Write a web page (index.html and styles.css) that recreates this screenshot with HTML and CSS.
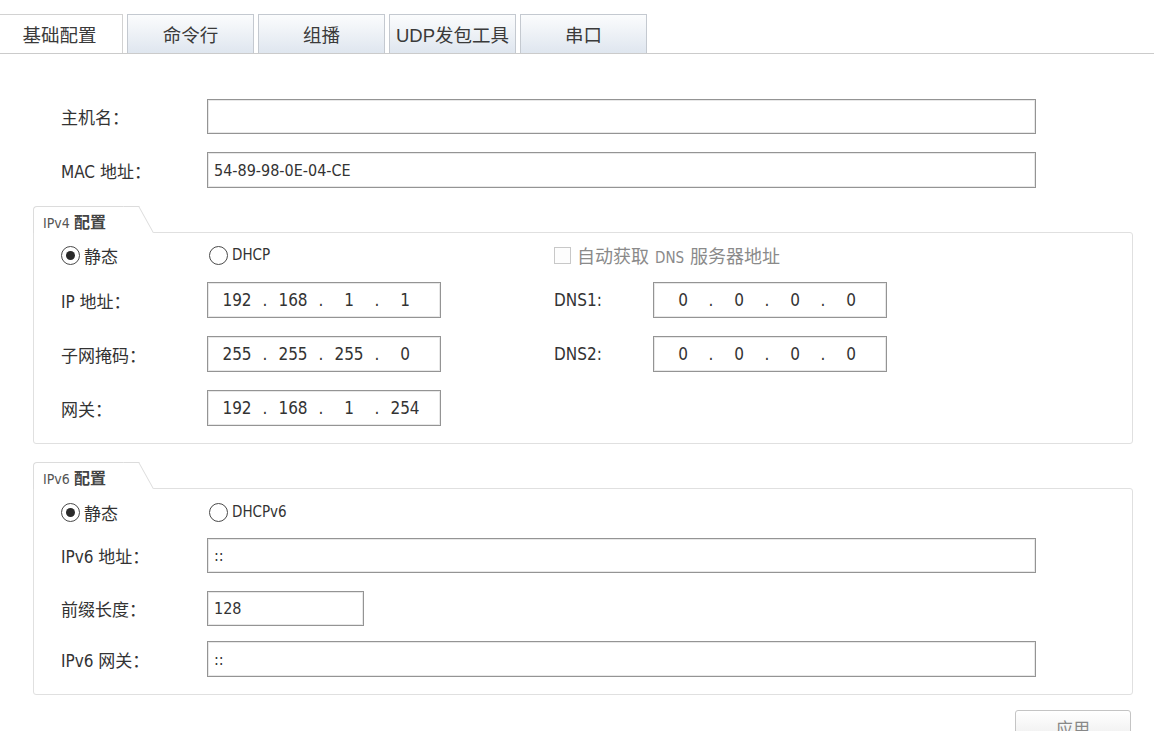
FILE: index.html
```html
<!DOCTYPE html>
<html lang="zh-CN">
<head>
<meta charset="utf-8">
<title>基础配置</title>
<link rel="stylesheet" href="styles.css">
</head>
<body>
<div class="tabs">
  <div class="tab active">基础配置</div>
  <div class="tab">命令行</div>
  <div class="tab">组播</div>
  <div class="tab">UDP发包工具</div>
  <div class="tab">串口</div>
</div>

<div class="content">
  <div class="row top-row r-host">
    <span class="lbl">主机名：</span>
    <div class="input wide"></div>
  </div>
  <div class="row top-row r-mac">
    <span class="lbl">MAC 地址：</span>
    <div class="input wide">54-89-98-0E-04-CE</div>
  </div>

  <div class="group g4">
    <div class="legend"><span class="lg-en">IPv4</span> <b>配置</b></div>
    <div class="box">
      <div class="row radio-row">
        <div class="col-left">
          <span class="opt opt-first"><span class="radio checked"></span><span class="txt">静态</span></span>
          <span class="opt"><span class="radio"></span><span class="txt lat">DHCP</span></span>
        </div>
        <div class="col-right">
          <span class="opt disabled"><span class="check"></span><span class="txt cbtxt">自动获取<span class="lat sp">DNS</span>服务器地址</span></span>
        </div>
      </div>
      <div class="row ip-row first-ip">
        <div class="col-left">
          <span class="lbl">IP 地址：</span>
          <div class="input ip"><span class="oct">192</span><span class="dot">.</span><span class="oct">168</span><span class="dot">.</span><span class="oct">1</span><span class="dot">.</span><span class="oct">1</span></div>
        </div>
        <div class="col-right">
          <span class="lbl lbl-dns">DNS1:</span>
          <div class="input ip"><span class="oct">0</span><span class="dot">.</span><span class="oct">0</span><span class="dot">.</span><span class="oct">0</span><span class="dot">.</span><span class="oct">0</span></div>
        </div>
      </div>
      <div class="row ip-row">
        <div class="col-left">
          <span class="lbl">子网掩码：</span>
          <div class="input ip"><span class="oct">255</span><span class="dot">.</span><span class="oct">255</span><span class="dot">.</span><span class="oct">255</span><span class="dot">.</span><span class="oct">0</span></div>
        </div>
        <div class="col-right">
          <span class="lbl lbl-dns">DNS2:</span>
          <div class="input ip"><span class="oct">0</span><span class="dot">.</span><span class="oct">0</span><span class="dot">.</span><span class="oct">0</span><span class="dot">.</span><span class="oct">0</span></div>
        </div>
      </div>
      <div class="row ip-row">
        <div class="col-left">
          <span class="lbl">网关：</span>
          <div class="input ip"><span class="oct">192</span><span class="dot">.</span><span class="oct">168</span><span class="dot">.</span><span class="oct">1</span><span class="dot">.</span><span class="oct">254</span></div>
        </div>
      </div>
    </div>
  </div>

  <div class="group g6">
    <div class="legend"><span class="lg-en">IPv6</span> <b>配置</b></div>
    <div class="box">
      <div class="row radio-row">
        <div class="col-left">
          <span class="opt opt-first"><span class="radio checked"></span><span class="txt">静态</span></span>
          <span class="opt"><span class="radio"></span><span class="txt lat">DHCPv6</span></span>
        </div>
      </div>
      <div class="row v6-addr">
        <span class="lbl">IPv6 地址：</span>
        <div class="input wide">::</div>
      </div>
      <div class="row v6-prefix">
        <span class="lbl">前缀长度：</span>
        <div class="input short">128</div>
      </div>
      <div class="row v6-gw">
        <span class="lbl">IPv6 网关：</span>
        <div class="input wide">::</div>
      </div>
    </div>
  </div>

  <div class="actions">
    <button class="btn" type="button">应用</button>
  </div>
</div>
</body>
</html>
```

FILE: styles.css
```css
html {
  overflow: hidden;
}

body {
  margin: 0;
  background: #ffffff;
  color: #333333;
  font-family: "DejaVu Sans Condensed", "Liberation Sans", "Noto Sans CJK SC", sans-serif;
  font-size: 17px;
}

/* ---------- tabs ---------- */
.tabs {
  display: flex;
  align-items: flex-end;
  gap: 4px;
  height: 39px;
  padding-top: 14px;
  border-bottom: 1px solid #cbcbcb;
}

.tab {
  box-sizing: border-box;
  width: 127px;
  height: 39px;
  display: flex;
  align-items: center;
  justify-content: center;
  border: 1px solid #c4c9d0;
  border-bottom: none;
  background: linear-gradient(#fbfcfd, #dfe6ef);
  font-family: "Liberation Sans", "Noto Sans CJK SC", sans-serif;
  font-size: 18.5px;
  color: #3a3a3a;
}

.tab:first-child {
  margin-left: -4px;
}

.tab.active {
  background: #ffffff;
  border-color: #d2d2d2;
}

/* ---------- content ---------- */
.content {
  padding: 45px 21px 0 33px;
}

.row {
  display: flex;
  align-items: center;
}

.top-row {
  padding-left: 28px;
}

.r-host {
  height: 35px;
}

.r-mac {
  height: 36px;
  margin-top: 18px;
}

.lbl {
  width: 146px;
  flex: none;
  white-space: nowrap;
}

.input {
  box-sizing: border-box;
  height: 100%;
  border: 1px solid #949494;
  box-shadow: inset 0 0 0 1px #e8e8e8;
  background: #fff;
  display: flex;
  align-items: center;
  padding-left: 6px;
  font-size: 16px;
  color: #333;
}

.input.wide {
  width: 829px;
}

.input.short {
  width: 157px;
}

/* ---------- groups ---------- */
.group {
  margin-top: 18px;
}

.legend {
  position: relative;
  z-index: 1;
  box-sizing: border-box;
  width: 105px;
  height: 27px;
  margin-bottom: -1px;
  padding: 3px 0 0 9px;
  border-top: 1px solid #dcdcdc;
  border-left: 1px solid #dcdcdc;
  border-top-left-radius: 4px;
  background: #fff;
  font-size: 15px;
  line-height: 22px;
  color: #444;
  white-space: nowrap;
}

.legend::after {
  content: "";
  position: absolute;
  top: -1px;
  bottom: 0;
  left: 100%;
  width: 15px;
  background: #fff;
  border-top: 1px solid #dcdcdc;
  border-right: 1px solid #dcdcdc;
  transform: skewX(29deg);
  transform-origin: bottom left;
}

.legend .lg-en {
  font-size: 14px;
  color: #555;
}

.legend b {
  font-family: "Noto Sans CJK SC", sans-serif;
  font-size: 16px;
  font-weight: 700;
  color: #444;
}

.box {
  border: 1px solid #e0e0e0;
  border-radius: 0 3px 3px 3px;
  padding: 0 0 17px 27px;
}

.radio-row {
  height: 24px;
  margin-top: 10px;
}

.g6 .radio-row {
  margin-top: 11px;
}

.ip-row {
  height: 36px;
  margin-top: 18px;
}

.ip-row.first-ip {
  margin-top: 15px;
}

.col-left {
  display: flex;
  align-items: center;
  width: 380px;
  height: 100%;
}

.col-right {
  display: flex;
  align-items: center;
  margin-left: 113px;
  height: 100%;
}

.lbl-dns {
  width: 99px;
}

.opt {
  display: flex;
  align-items: center;
  white-space: nowrap;
}

.opt-first {
  width: 148px;
}

.txt.lat {
  font-size: 15px;
}

.radio {
  box-sizing: border-box;
  width: 19px;
  height: 19px;
  border: 1.5px solid #4a4a4a;
  border-radius: 50%;
  margin-right: 4px;
  background: #fff;
  display: flex;
  align-items: center;
  justify-content: center;
}

.radio.checked::before {
  content: "";
  width: 9px;
  height: 9px;
  border-radius: 50%;
  background: #2a2a2a;
}

.check {
  box-sizing: border-box;
  width: 17px;
  height: 17px;
  border: 1px solid #c8c8c8;
  background: #fdfdfd;
  margin-right: 6px;
}

.opt.disabled {
  color: #8a8a8a;
}

.cbtxt {
  font-size: 18px;
}

.sp {
  font-size: 15px;
  margin: 0 6px;
}

.input.ip {
  width: 234px;
  padding-left: 5px;
  font-size: 17px;
}

.oct {
  width: 48px;
  text-align: center;
}

.dot {
  width: 8px;
  text-align: center;
}

/* ---------- IPv6 ---------- */
.v6-addr {
  height: 35px;
  margin-top: 14px;
}

.v6-prefix {
  height: 35px;
  margin-top: 18px;
}

.v6-gw {
  height: 36px;
  margin-top: 15px;
}

/* ---------- actions ---------- */
.actions {
  display: flex;
  justify-content: flex-end;
  margin-top: 15px;
  padding-right: 2px;
}

.btn {
  width: 116px;
  height: 34px;
  border: 1px solid #c4c4c4;
  border-radius: 3px;
  background: linear-gradient(#ffffff, #ececec);
  font-family: "Noto Sans CJK SC", sans-serif;
  font-size: 17px;
  color: #888;
  padding: 0;
}
```
